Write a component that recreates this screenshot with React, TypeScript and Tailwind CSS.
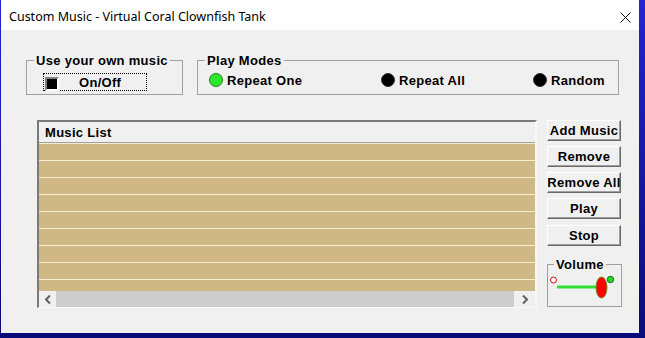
const ui = "font-['Liberation_Sans',Arial,sans-serif] font-bold text-[13px] leading-[15px] tracking-[0.3px] text-black";

function Chevron({ dir }: { dir: "left" | "right" }) {
  return (
    <svg width="6" height="9" viewBox="0 0 6 9">
      <path
        d={dir === "left" ? "M5 0.5 L1 4.5 L5 8.5" : "M1 0.5 L5 4.5 L1 8.5"}
        fill="none"
        stroke="#606060"
        strokeWidth="2"
      />
    </svg>
  );
}

function Button({ label }: { label: string }) {
  return (
    <div
      className={`${ui} h-[21px] w-[74px] flex items-center justify-center bg-[#f0f0f0] border border-t-white border-l-white border-r-[#696969] border-b-[#696969] shadow-[inset_-1px_-1px_0_#a0a0a0] whitespace-nowrap`}
    >
      {label}
    </div>
  );
}

function Radio({ label, on, width }: { label: string; on?: boolean; width: string }) {
  return (
    <div className={`flex items-center gap-[4px] ${width}`}>
      <span
        className={`w-[14px] h-[14px] rounded-full border ${
          on ? "bg-[#2ee82e] border-[#237a23]" : "bg-black border-[#333]"
        }`}
      />
      <span className={ui}>{label}</span>
    </div>
  );
}

export default function App() {
  const rows = Array.from({ length: 8 });
  return (
    <div className="w-[645px] h-[338px] overflow-hidden bg-gradient-to-b from-[#2424d4] to-[#0a0a78]">
      <div className="ml-px w-[638px] h-[333px] bg-[#f0f0f0] flex flex-col">
        {/* Title bar */}
        <div className="h-[30px] shrink-0 bg-white flex items-center justify-between pl-[8px] pr-[8px] pt-[5px]">
          <span className="font-['Noto_Sans',sans-serif] text-[12.5px] text-black">
            Custom Music - Virtual Coral Clownfish Tank
          </span>
          <svg width="11" height="11" viewBox="0 0 11 11">
            <path d="M0.5 0.5 L10.5 10.5 M10.5 0.5 L0.5 10.5" stroke="#111" strokeWidth="1" />
          </svg>
        </div>

        {/* Top groups */}
        <div className="flex mt-[23px] ml-[25px]">
          <fieldset className="w-[157px] h-[42px] border border-[#a0a0a0]">
            <legend className={`${ui} ml-[7px] px-[2px]`}>Use your own music</legend>
            <div className="ml-[16px] mt-[5px] w-[104px] h-[18px] border border-dotted border-black flex">
              <span className="ml-px mt-[3px] w-[14px] h-[14px] bg-black border-2 border-t-[#808080] border-l-[#808080] border-r-white border-b-white" />
              <span className={`${ui} ml-[20px] mt-px`}>On/Off</span>
            </div>
          </fieldset>

          <fieldset className="ml-[14px] w-[422px] h-[42px] border border-[#a0a0a0]">
            <legend className={`${ui} ml-[7px] px-[2px]`}>Play Modes</legend>
            <div className="flex mt-[4px] ml-[11px] h-[16px]">
              <Radio label="Repeat One" on width="w-[172px]" />
              <Radio label="Repeat All" width="w-[152px]" />
              <Radio label="Random" width="w-[80px]" />
            </div>
          </fieldset>
        </div>

        {/* List + buttons */}
        <div className="flex mt-[25px] ml-[36px]">
          <div className="w-[500px] h-[188px] flex flex-col border-t-2 border-l-2 border-t-[#7a7a7a] border-l-[#7a7a7a] border-r-2 border-b border-r-[#f8f8f8] border-b-[#f8f8f8]">
            <div className={`${ui} h-[21px] shrink-0 bg-[#f0f0f0] pl-[6px] pt-[3px] border-b border-[#a0a0a0]`}>
              Music List
            </div>
            <div className="flex-1 flex flex-col bg-[#d0b884] border-t border-[#f6ecd0]">
              {rows.map((_, i) => (
                <div key={i} className="h-[17px] shrink-0 border-b border-[#f6ecd0]" />
              ))}
            </div>
            <div className="h-[16px] shrink-0 flex bg-[#cdcdcd]">
              <div className="w-[17px] bg-[#f0f0f0] flex items-center justify-center">
                <Chevron dir="left" />
              </div>
              <div className="flex-1" />
              <div className="w-[21px] bg-[#f0f0f0] flex items-center justify-center">
                <Chevron dir="right" />
              </div>
            </div>
          </div>

          <div className="ml-[10px] flex flex-col">
            <div className="flex flex-col gap-[5px]">
              <Button label="Add Music" />
              <Button label="Remove" />
              <Button label="Remove All" />
              <Button label="Play" />
              <div className="mt-px">
                <Button label="Stop" />
              </div>
            </div>

            <fieldset className="mt-[11px] w-[75px] h-[50px] border border-[#a0a0a0]">
              <legend className={`${ui} ml-[6px] px-[2px]`}>Volume</legend>
              <svg width="73" height="34" viewBox="0 0 73 34">
                <circle cx="5.5" cy="8" r="3" fill="white" stroke="#d01010" strokeWidth="1" />
                <line x1="9" y1="15" x2="50" y2="15" stroke="#2ee22e" strokeWidth="3" />
                <ellipse cx="53.5" cy="15.5" rx="5.5" ry="10.5" fill="#ff0000" stroke="#6a8a1a" strokeWidth="1" />
                <circle cx="62.5" cy="7.5" r="3.2" fill="#22dd22" stroke="#1a6a1a" strokeWidth="1" />
              </svg>
            </fieldset>
          </div>
        </div>
      </div>
    </div>
  );
}
